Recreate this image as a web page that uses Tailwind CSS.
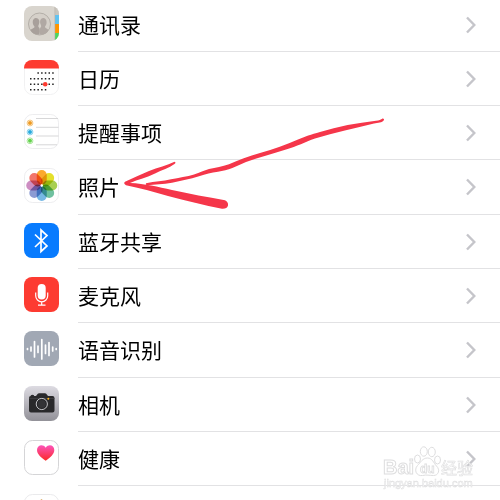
<!DOCTYPE html>
<html lang="zh-CN">
<head>
    <meta charset="UTF-8">
    <meta name="viewport" content="width=device-width, initial-scale=1.0">
    <script src="https://cdn.jsdelivr.net/npm/@tailwindcss/browser@4"></script>
    <title>隐私</title>
</head>
<body class="bg-white text-black font-['Noto_Sans_CJK_SC',sans-serif]">

<main class="relative h-screen overflow-hidden">
    <!-- the list is scrolled slightly past its top -->
    <nav class="-mt-0.5 text-[21px] leading-8">

        <!-- contacts -->
        <a href="#contacts" class="flex h-[54px] pl-6">
            <span class="flex items-center w-[54px] shrink-0 pb-1">
                <svg class="size-[35px]" viewBox="0 0 35 35" aria-hidden="true">
                    <defs><clipPath id="tile"><rect width="35" height="35" rx="8"/></clipPath></defs>
                    <g clip-path="url(#tile)">
                        <rect width="35" height="35" fill="#d9d5ce"/>
                        <rect x="31" width="4" height="9" fill="#c9c5bd"/>
                        <rect x="31" y="9" width="4" height="9" fill="#5fc3f2"/>
                        <rect x="31" y="18" width="4" height="9" fill="#ff9500"/>
                        <rect x="31" y="27" width="4" height="8" fill="#4cd55f"/>
                        <path d="M30.8 0V35" stroke="#b5b0a8" stroke-width=".6"/>
                    </g>
                    <circle cx="15.5" cy="18" r="11" fill="#d5d0c9" stroke="#aaa49e" stroke-width=".8"/>
                    <path d="M6.5 24c1.500-1.800 4-1.500 4-3.500-2.200-2-2.800-7.500 1-8.500 4-.3 4.500 4 3.300 6.500-.7 1.500-.6 2.500.2 3 1 .8 1 4.500.5 7-4 .5-7.500-1-9-4.500z" fill="#a8a09b"/>
                    <path d="M24.500 24c-1.500-1.800-3.500-1.500-3.500-3.500 2.200-2 2.500-7.500-1.300-8.500-3.700-.3-4.200 4-3 6.500.7 1.500.6 2.500-.2 3-.8.8-.8 4.500-.3 7 4 .3 7.300-1 8.300-4.500z" fill="#b0a8a3"/>
                </svg>
            </span>
            <span class="flex grow items-center justify-between border-b border-[#e2e2e4] pr-6">
                <span class="pb-0.5">通讯录</span>
                <svg class="h-[18px] w-[10px]" viewBox="0 0 10 18" fill="none" stroke="#c5c5ca" stroke-width="2.400" aria-hidden="true"><path d="M1 1.500L8.300 9 1 16.500"/></svg>
            </span>
        </a>

        <!-- calendar -->
        <a href="#calendar" class="flex h-[54px] pl-6">
            <span class="flex items-center w-[54px] shrink-0 pb-1">
                <svg class="size-[35px]" viewBox="0 0 35 35" aria-hidden="true">
                    <rect x=".5" y=".5" width="34" height="34" rx="8" fill="#fff" stroke="#eeeeef" stroke-width=".8"/>
                    <path d="M0 8.500V8a8 8 0 0 1 8-8h19a8 8 0 0 1 8 8v.5z" fill="#fd3b30"/>
                    <g stroke="#222" stroke-width="1.500" stroke-dasharray="1.500 2.200">
                        <path d="M13.400 13H30"/>
                        <path d="M6 18.700H30"/>
                        <path d="M6 24.200H30"/>
                        <path d="M6 29.700H23"/>
                    </g>
                    <circle cx="21.200" cy="24.200" r="2.300" fill="#fd3b30"/>
                </svg>
            </span>
            <span class="flex grow items-center justify-between border-b border-[#e2e2e4] pr-6">
                <span class="pb-0.5">日历</span>
                <svg class="h-[18px] w-[10px]" viewBox="0 0 10 18" fill="none" stroke="#c5c5ca" stroke-width="2.400" aria-hidden="true"><path d="M1 1.500L8.300 9 1 16.500"/></svg>
            </span>
        </a>

        <!-- reminders -->
        <a href="#reminders" class="flex h-[54px] pl-6">
            <span class="flex items-center w-[54px] shrink-0 pb-1">
                <svg class="size-[35px]" viewBox="0 0 35 35" aria-hidden="true">
                    <rect x=".5" y=".5" width="34" height="34" rx="8" fill="#fff" stroke="#e9e9eb" stroke-width=".8"/>
                    <path d="M12 4.500H34M12 13.300H34.500M12 22H34.500M12 30.800H33" stroke="#d2d2d4" stroke-width=".9"/>
                    <g fill="none" stroke-width=".8">
                        <circle cx="6" cy="9" r="2.900" stroke="#f3b65d"/>
                        <circle cx="6" cy="18" r="2.900" stroke="#6cc7ea"/>
                        <circle cx="6" cy="26.800" r="2.900" stroke="#93e080"/>
                    </g>
                    <circle cx="6" cy="9" r="2" fill="#ee9a22"/>
                    <circle cx="6" cy="18" r="2" fill="#28aadd"/>
                    <circle cx="6" cy="26.800" r="2" fill="#63d24c"/>
                </svg>
            </span>
            <span class="flex grow items-center justify-between border-b border-[#e2e2e4] pr-6">
                <span class="pb-0.5">提醒事项</span>
                <svg class="h-[18px] w-[10px]" viewBox="0 0 10 18" fill="none" stroke="#c5c5ca" stroke-width="2.400" aria-hidden="true"><path d="M1 1.500L8.300 9 1 16.500"/></svg>
            </span>
        </a>

        <!-- photos -->
        <a href="#photos" class="flex h-[55px] pl-6">
            <span class="flex items-center w-[54px] shrink-0 pb-1">
                <svg class="size-[35px]" viewBox="0 0 35 35" aria-hidden="true">
                    <rect x=".5" y=".5" width="34" height="34" rx="8" fill="#fff" stroke="#e9e9eb" stroke-width=".8"/>
                    <g class="isolate">
                        <rect class="mix-blend-multiply" x="12.750" y="2" width="10" height="14.800" rx="5" fill="#fba92d"/>
                        <rect class="mix-blend-multiply" x="12.750" y="2" width="10" height="14.800" rx="5" fill="#e4e02c" transform="rotate(45 17.750 17.500)"/>
                        <rect class="mix-blend-multiply" x="12.750" y="2" width="10" height="14.800" rx="5" fill="#a8cf51" transform="rotate(90 17.750 17.500)"/>
                        <rect class="mix-blend-multiply" x="12.750" y="2" width="10" height="14.800" rx="5" fill="#70c1a0" transform="rotate(135 17.750 17.500)"/>
                        <rect class="mix-blend-multiply" x="12.750" y="2" width="10" height="14.800" rx="5" fill="#76b8e5" transform="rotate(180 17.750 17.500)"/>
                        <rect class="mix-blend-multiply" x="12.750" y="2" width="10" height="14.800" rx="5" fill="#8b9bd3" transform="rotate(225 17.750 17.500)"/>
                        <rect class="mix-blend-multiply" x="12.750" y="2" width="10" height="14.800" rx="5" fill="#cd8ec2" transform="rotate(270 17.750 17.500)"/>
                        <rect class="mix-blend-multiply" x="12.750" y="2" width="10" height="14.800" rx="5" fill="#f2766b" transform="rotate(315 17.750 17.500)"/>
                    </g>
                    <circle cx="17.750" cy="17.500" r="1.200" fill="#fff"/>
                </svg>
            </span>
            <span class="flex grow items-center justify-between border-b border-[#e2e2e4] pr-6">
                <span class="pb-0.5">照片</span>
                <svg class="h-[18px] w-[10px]" viewBox="0 0 10 18" fill="none" stroke="#c5c5ca" stroke-width="2.400" aria-hidden="true"><path d="M1 1.500L8.300 9 1 16.500"/></svg>
            </span>
        </a>

        <!-- bluetooth -->
        <a href="#bluetooth" class="flex h-[54px] pl-6">
            <span class="flex items-center w-[54px] shrink-0 pb-1">
                <svg class="size-[35px]" viewBox="0 0 35 35" aria-hidden="true">
                    <rect width="35" height="35" rx="8" fill="#087bfe"/>
                    <path d="M11 11.500l12 11.500-6 5.500V7l6 5.500L11 24" fill="none" stroke="#fff" stroke-width="1.700"/>
                </svg>
            </span>
            <span class="flex grow items-center justify-between border-b border-[#e2e2e4] pr-6">
                <span class="pb-0.5">蓝牙共享</span>
                <svg class="h-[18px] w-[10px]" viewBox="0 0 10 18" fill="none" stroke="#c5c5ca" stroke-width="2.400" aria-hidden="true"><path d="M1 1.500L8.300 9 1 16.500"/></svg>
            </span>
        </a>

        <!-- microphone -->
        <a href="#microphone" class="flex h-[54px] pl-6">
            <span class="flex items-center w-[54px] shrink-0 pb-1">
                <svg class="size-[35px]" viewBox="0 0 35 35" aria-hidden="true">
                    <rect width="35" height="35" rx="8" fill="#fd3b31"/>
                    <rect x="13.700" y="7" width="8" height="15.500" rx="4" fill="#fff"/>
                    <path d="M11.700 15.500v3.300a6 6 0 0 0 12 0v-3.300M17.700 25v3M14 28.200h7.500" fill="none" stroke="#fff" stroke-width="1.200"/>
                </svg>
            </span>
            <span class="flex grow items-center justify-between border-b border-[#e2e2e4] pr-6">
                <span class="pb-0.5">麦克风</span>
                <svg class="h-[18px] w-[10px]" viewBox="0 0 10 18" fill="none" stroke="#c5c5ca" stroke-width="2.400" aria-hidden="true"><path d="M1 1.500L8.300 9 1 16.500"/></svg>
            </span>
        </a>

        <!-- speech recognition -->
        <a href="#speech" class="flex h-[55px] pl-6">
            <span class="flex items-center w-[54px] shrink-0 pb-1">
                <svg class="size-[35px]" viewBox="0 0 35 35" aria-hidden="true">
                    <rect width="35" height="35" rx="8" fill="#a1a8b4"/>
                    <path d="M3.500 17.500v1M7 16v4M10.500 10.500v15.500M14 15v6.500M17.800 8.500v19.500M21.500 14v8.500M25 11.500v13M28.700 16v4M32.200 17.500v1" stroke="#fff" stroke-width="1.700" stroke-linecap="round"/>
                </svg>
            </span>
            <span class="flex grow items-center justify-between border-b border-[#e2e2e4] pr-6">
                <span class="pb-0.5">语音识别</span>
                <svg class="h-[18px] w-[10px]" viewBox="0 0 10 18" fill="none" stroke="#c5c5ca" stroke-width="2.400" aria-hidden="true"><path d="M1 1.500L8.300 9 1 16.500"/></svg>
            </span>
        </a>

        <!-- camera -->
        <a href="#camera" class="flex h-[54px] pl-6">
            <span class="flex items-center w-[54px] shrink-0 pb-1">
                <svg class="size-[35px]" viewBox="0 0 35 35" aria-hidden="true">
                    <defs>
                        <linearGradient id="silver" x2="0" y2="1"><stop stop-color="#dddbe2"/><stop offset="1" stop-color="#929198"/></linearGradient>
                    </defs>
                    <rect width="35" height="35" rx="8" fill="url(#silver)"/>
                    <path d="M5 12q0-1.800 1.800-2v-.8q1.600-.8 3.200 0v.8h2l1.800-2.300q.4-.5 1.200-.5h6q.8 0 1.200.5l1.800 2.300h4.500q2 0 2 2v12.500q0 2-2 2H7q-2 0-2-2z" fill="#29292b"/>
                    <path d="M5 12.500h25.500" stroke="#48484b" stroke-width=".6"/>
                    <circle cx="17.800" cy="18" r="5.600" fill="#262628" stroke="#c4c4c8" stroke-width="1"/>
                    <circle cx="17.800" cy="18" r="4" fill="#333336"/>
                    <circle cx="24.300" cy="12.700" r="1" fill="#ffb51c"/>
                </svg>
            </span>
            <span class="flex grow items-center justify-between border-b border-[#e2e2e4] pr-6">
                <span class="pb-0.5">相机</span>
                <svg class="h-[18px] w-[10px]" viewBox="0 0 10 18" fill="none" stroke="#c5c5ca" stroke-width="2.400" aria-hidden="true"><path d="M1 1.500L8.300 9 1 16.500"/></svg>
            </span>
        </a>

        <!-- health -->
        <a href="#health" class="flex h-[54px] pl-6">
            <span class="flex items-center w-[54px] shrink-0 pb-1">
                <svg class="size-[35px]" viewBox="0 0 35 35" aria-hidden="true">
                    <defs>
                        <linearGradient id="heart" x2="0" y2="1"><stop stop-color="#fc54ba"/><stop offset="1" stop-color="#fb2826"/></linearGradient>
                    </defs>
                    <rect x=".5" y=".5" width="34" height="34" rx="8" fill="#fff" stroke="#d5d5d7"/>
                    <path d="M21.700 20.800C17 17.500 13 14 13 10c0-5 6-6.300 8.700-2.300C24.400 3.700 30.300 5 30.300 10c0 4-3.900 7.500-8.600 10.800z" fill="url(#heart)"/>
                </svg>
            </span>
            <span class="flex grow items-center justify-between border-b border-[#e2e2e4] pr-6">
                <span class="pb-0.5">健康</span>
                <svg class="h-[18px] w-[10px]" viewBox="0 0 10 18" fill="none" stroke="#c5c5ca" stroke-width="2.400" aria-hidden="true"><path d="M1 1.500L8.300 9 1 16.500"/></svg>
            </span>
        </a>

        <!-- homekit, only its top edge is in view -->
        <a href="#homekit" aria-label="HomeKit" class="flex h-[54px] pl-6">
            <span class="flex items-center w-[54px] shrink-0 pb-1">
                <svg class="size-[35px]" viewBox="0 0 35 35" aria-hidden="true">
                    <rect x=".5" y=".5" width="34" height="34" rx="8" fill="#fff" stroke="#e5e5e7" stroke-width=".8"/>
                    <path d="M17.500 5L5 16h3v13h19V16h3z" fill="#d9a860"/>
                </svg>
            </span>
        </a>
    </nav>

    <!-- hand drawn arrow pointing at the photos row -->
    <svg class="pointer-events-none absolute left-[120px] top-[110px] h-[104px] w-[270px]" viewBox="120 110 270 104" fill="#f5364a" aria-hidden="true">
        <path d="M146 183.200C155 181.300 163 181.500 171 179.300C179 177.800 187 176.500 194 174.500C200 172.500 204 170.500 209 169C216 168 222 166.500 229 164.300C238 160 249 156 260 153C274 149 286 145 298 139.500C305 136.500 311 134.500 320 132C338 126.500 357 123 376 120.800C379 120.500 381 119.500 382.500 118.500Q384.500 118.300 384 120C382 123 378 122.500 374 123.500C355 128 335 132.500 315 138.500C305 142 297 146.500 286 149.500C273 153.500 260 157 246 162C237 166 228 170.500 218 171.700C211 172.300 206 174 199 176.300C190 179 181 181 172 182.800C163 184.500 155 184.500 147 185.200Q145 184.500 146 183.200Z"/>
        <path d="M174.500 161.800Q176.500 162.500 174.500 164C169 168 162 170 155 173.500C147 177.500 138 179.500 130 183C145 183.500 158 187 172 190C190 194 207 197 225 200.300Q228.500 202 228 205.500Q227 209 222 208.700C204 205.500 186 200.500 168 196C154 192 139 188 126 185.300Q123 183.500 125 181.800C133 178 141 174.500 149 171C158 167.500 167 165.500 174.500 161.800Z"/>
    </svg>

    <!-- watermark -->
    <svg class="pointer-events-none absolute bottom-1 right-6 h-[54px] w-[96px]" viewBox="380 442 96 54" fill="#fff" fill-opacity=".8" stroke="#dededf" stroke-width="1" font-family="Liberation Sans, Noto Sans CJK SC, sans-serif">
        <ellipse cx="417.500" cy="459" rx="3" ry="4"/>
        <ellipse cx="423.800" cy="451.500" rx="3.500" ry="4.700"/>
        <ellipse cx="431.800" cy="452" rx="3.500" ry="4.700"/>
        <ellipse cx="437.500" cy="460" rx="3" ry="4"/>
        <path d="M427.500 458c5 0 6 5 9 8 4 4 2 9.500-3 9.500-4 0-7-1-11 0-6 1-9-5.500-5-10 3-3 5-7.500 10-7.500z"/>
        <text x="383" y="474" font-size="20" font-weight="bold">Bai</text>
        <text x="420" y="473" font-size="12" font-weight="bold" stroke-width=".8">du</text>
        <text x="441" y="474" font-size="16" stroke-width=".6">经验</text>
        <text x="384" y="487" font-size="11" stroke-width=".5">jingyan.baidu.com</text>
    </svg>
</main>

</body>
</html>
